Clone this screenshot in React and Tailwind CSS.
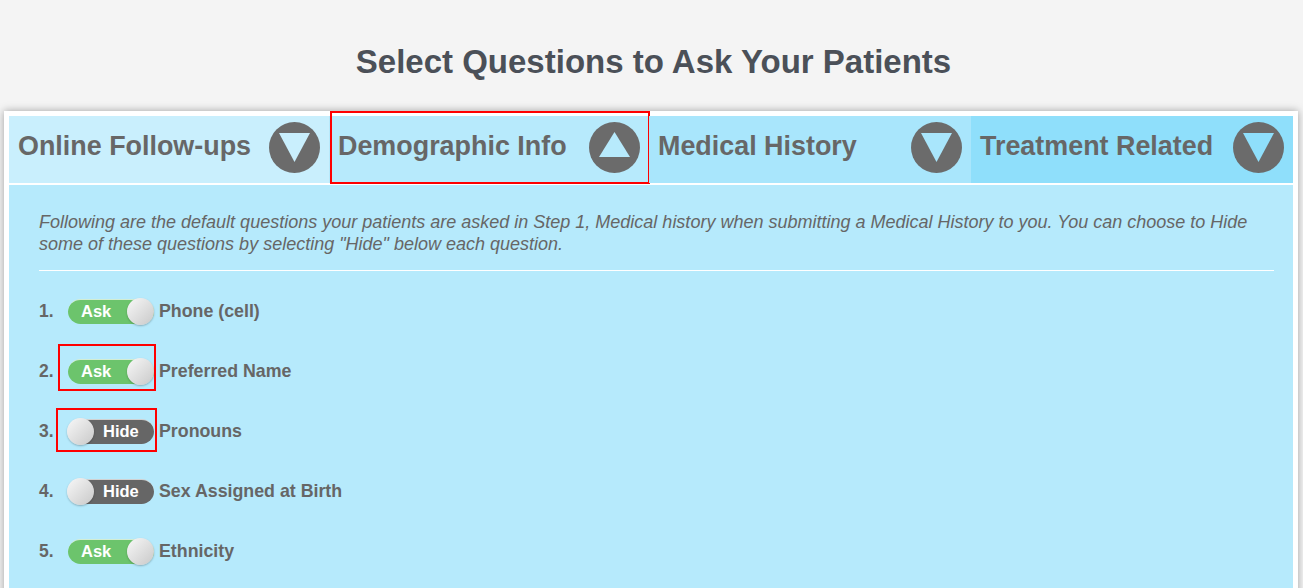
import React from 'react';

const tabs = [
  { label: 'Online Follow-ups', bg: 'bg-[#c9effd]', fill: '#c9effd', open: false },
  { label: 'Demographic Info', bg: 'bg-[#b7eafc]', fill: '#b7eafc', open: true, marked: true },
  { label: 'Medical History', bg: 'bg-[#a9e6fc]', fill: '#a9e6fc', open: false },
  { label: 'Treatment Related', bg: 'bg-[#8fdffb]', fill: '#8fdffb', open: false },
];

const questions = [
  { label: 'Phone (cell)', ask: true },
  { label: 'Preferred Name', ask: true, mark: 'ask' },
  { label: 'Pronouns', ask: false, mark: 'hide' },
  { label: 'Sex Assigned at Birth', ask: false },
  { label: 'Ethnicity', ask: true },
];

const ArrowBadge = ({ open, fill }) => (
  <svg width="51" height="51" viewBox="0 0 51 51" className="shrink-0">
    <circle cx="25.5" cy="25.5" r="25.5" fill="#6b6b6b" />
    {open ? (
      <polygon points="25.5,10 41,35 10,35" fill={fill} />
    ) : (
      <polygon points="10,11 41,11 25.5,40" fill={fill} />
    )}
  </svg>
);

const Toggle = ({ ask }) => (
  <div
    className={`relative w-[86px] h-[25px] rounded-full border-t border-white/70 ${
      ask ? 'bg-[#6cc46c]' : 'bg-[#666666]'
    }`}
  >
    <span
      className={`absolute top-0 h-full flex items-center text-[16.5px] font-bold text-white leading-none ${
        ask ? 'left-[13px]' : 'left-[35px]'
      }`}
    >
      {ask ? 'Ask' : 'Hide'}
    </span>
    <span
      className={`absolute top-[-2px] w-[27px] h-[27px] rounded-full bg-gradient-to-br from-[#f8f8f8] to-[#c9c9c9] shadow-[0_1px_2px_rgba(0,0,0,0.25)] ${
        ask ? 'right-0' : 'left-[-1px]'
      }`}
    />
  </div>
);

export default function App() {
  return (
    <div className="min-h-screen bg-[#f4f4f4] font-['Liberation_Sans',Arial,sans-serif]">
      <h1 className="h-[111px] pt-[43px] pl-[4px] text-center text-[33px] leading-[38px] font-bold text-[#4b5058]">
        Select Questions to Ask Your Patients
      </h1>

      <div className="ml-[4px] w-[1294px] bg-white p-[5px] pb-0 shadow-[0_0_8px_rgba(0,0,0,0.35)]">
        {/* tab strip */}
        <div className="grid grid-cols-[320px_320px_322px_322px] h-[67px]">
          {tabs.map((t) => (
            <div
              key={t.label}
              className={`relative flex items-center justify-between pl-[9px] pr-[9px] pb-[4px] ${t.bg}`}
            >
              <span className="mb-[2px] text-[26.9px] font-bold text-[#676767] leading-none">{t.label}</span>
              <ArrowBadge open={t.open} fill={t.fill} />
              {t.marked && (
                <div className="absolute top-[-5px] left-[1px] right-[-1px] bottom-[-1px] border-2 border-[#ff0000]" />
              )}
            </div>
          ))}
        </div>

        {/* question list */}
        <div className="mt-[2px] bg-[#b6eafc] pl-[30px] pr-[19px] pt-[26px] pb-[40px]">
          <p className="text-[18px] leading-[22px] italic text-[#666666]">
            Following are the default questions your patients are asked in Step 1, Medical history when
            submitting a Medical History to you. You can choose to Hide some of these questions by selecting
            "Hide" below each question.
          </p>
          <div className="mt-[15px] h-px bg-white" />

          <ol className="mt-[10px]">
            {questions.map((q, i) => (
              <li key={q.label} className="flex items-center h-[60px]">
                <span className="w-[29px] text-[17.5px] font-bold text-[#666666]">{i + 1}.</span>
                <div className="relative">
                  <Toggle ask={q.ask} />
                  {q.mark === 'ask' && (
                    <div className="absolute top-[-15px] bottom-[-7px] left-[-10px] right-[-2px] border-2 border-[#ff0000]" />
                  )}
                  {q.mark === 'hide' && (
                    <div className="absolute top-[-11px] bottom-[-8px] left-[-12px] right-[-3px] border-2 border-[#ff0000]" />
                  )}
                </div>
                <span className="ml-[5px] text-[17.8px] font-bold text-[#666666]">{q.label}</span>
              </li>
            ))}
          </ol>
        </div>
      </div>
    </div>
  );
}
